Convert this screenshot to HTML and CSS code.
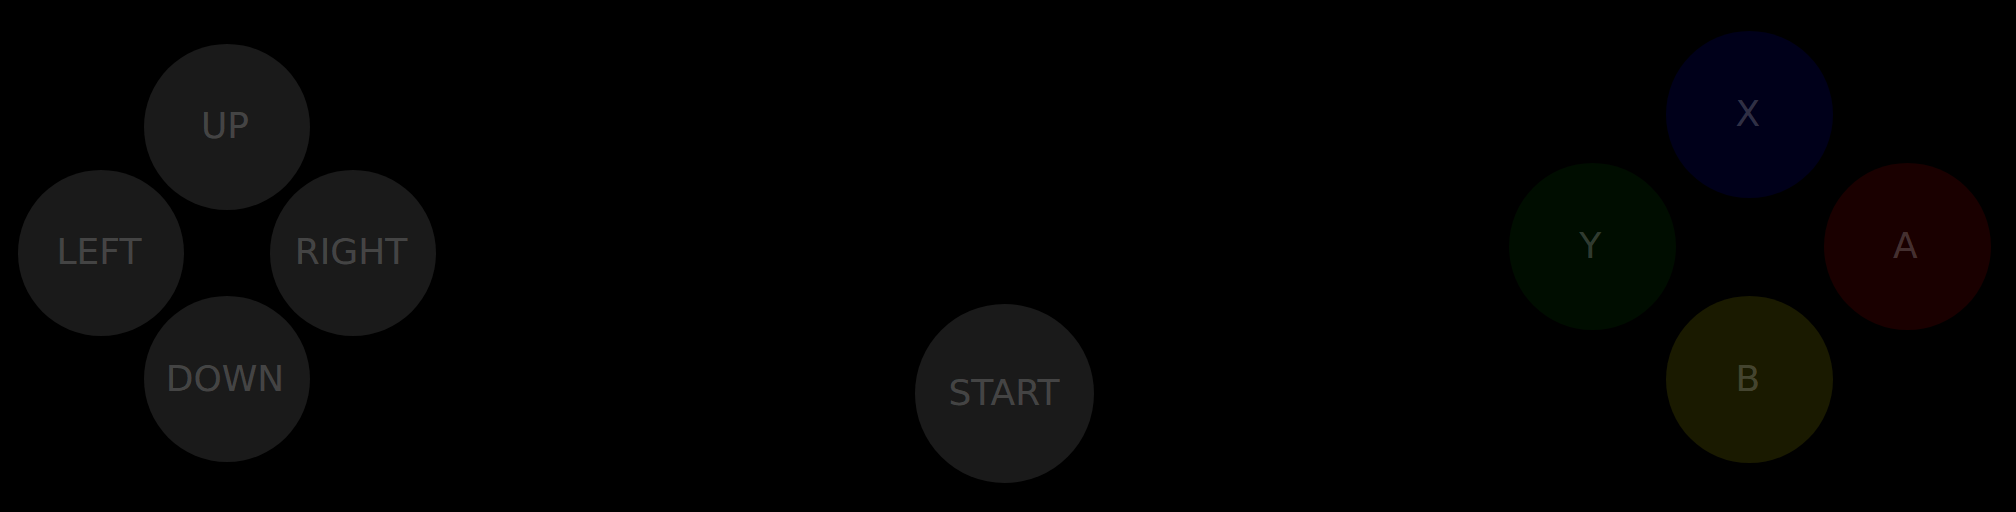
FILE: index.html
```html
<!DOCTYPE html>
<html>
<head>
<meta charset="utf-8">
<link rel="stylesheet" href="styles.css">
</head>
<body>
<div class="pad">
  <div class="dpad">
    <div class="btn gray up">UP</div>
    <div class="btn gray left">LEFT</div>
    <div class="btn gray right">RIGHT</div>
    <div class="btn gray down">DOWN</div>
  </div>
  <div class="btn gray start">START</div>
  <div class="face">
    <div class="btn blue up">X</div>
    <div class="btn green left">Y</div>
    <div class="btn red right">A</div>
    <div class="btn yellow down">B</div>
  </div>
</div>
</body>
</html>
```
FILE: styles.css
```css
html, body {
  margin: 0;
  padding: 0;
  background: #000;
}
body {
  width: 2016px;
  height: 512px;
  overflow: hidden;
  font-family: "DejaVu Sans", sans-serif;
}
.pad {
  display: flex;
  align-items: flex-start;
  height: 512px;
}
.btn {
  display: flex;
  align-items: center;
  justify-content: center;
  border-radius: 50%;
  padding: 0 4px 2px 0;
  font-size: 36px;
  color: rgba(255, 255, 255, 0.21);
  box-sizing: border-box;
}
.gray { background: #1a1a1a; }
.blue { background: #00001a; }
.green { background: #000d00; }
.red { background: #1a0000; }
.yellow { background: #1a1a00; }

.up { grid-column: 2; grid-row: 1; }
.left { grid-column: 1; grid-row: 2; }
.right { grid-column: 3; grid-row: 2; }
.down { grid-column: 2; grid-row: 3; }

.dpad {
  display: grid;
  grid-template-columns: repeat(3, 126px);
  grid-template-rows: repeat(3, 126.25px);
  margin: 63.5px 0 0 38px;
}
.dpad .btn {
  width: 166px;
  height: 166px;
  margin: -20px;
}
.start {
  width: 179px;
  height: 179px;
  padding: 0 0 2px 0;
  margin: 304px 0 0 498.5px;
}
.face {
  display: grid;
  grid-template-columns: repeat(3, 157.5px);
  grid-template-rows: repeat(3, 132.5px);
  margin: 47.75px 0 0 420px;
}
.face .btn {
  width: 167px;
  height: 167px;
  margin: -17.25px -4.75px;
}
```
